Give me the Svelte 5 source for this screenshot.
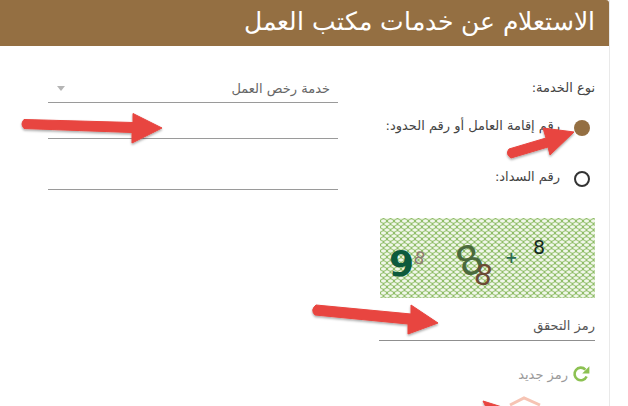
<script lang="ts">
  const serviceTypes = [
    { label: "رقم إقامة العامل أو رقم الحدود:", checked: true },
    { label: "رقم السداد:", checked: false },
  ];
</script>

<div class="page">
  <div class="card" dir="rtl">
    <header class="title">الاستعلام عن خدمات مكتب العمل</header>

    <form class="form">
      <div class="row first">
        <span class="label">نوع الخدمة:</span>
        <div class="select">
          <span>خدمة رخص العمل</span>
          <i class="caret"></i>
        </div>
      </div>

      {#each serviceTypes as item}
        <div class="row radio-row">
          <label class="radio-label">
            <span class="radio" class:checked={item.checked}></span>
            <span class="label">{item.label}</span>
          </label>
          <div class="line"></div>
        </div>
      {/each}

      <div class="captcha">
        <svg viewBox="0 0 215 80" width="215" height="80">
          <text x="9" y="58" class="d-nine">9</text>
          <text x="34" y="46" class="d-small" transform="rotate(15 40 40)">8</text>
          <text x="76" y="56" class="d-ring" transform="rotate(-25 90 40)">8</text>
          <text x="95" y="67" class="d-ring brown" transform="rotate(10 106 55)">8</text>
          <text x="125" y="45" class="d-plus">+</text>
          <text x="153" y="36" class="d-eight">8</text>
        </svg>
      </div>

      <div class="code-input">رمز التحقق</div>

      <div class="new-code">
        <svg width="18" height="18" viewBox="0 0 18 18" fill="none">
          <path d="M14.6 11.5A6.3 6.3 0 1 1 13.4 4.6" stroke="#8cc152" stroke-width="2.6" />
          <path d="M17.4 1.2V8.4H10.2Z" fill="#8cc152" />
        </svg>
        <span>رمز جديد</span>
      </div>
    </form>
  </div>

  <svg class="arrows" width="628" height="406" viewBox="0 0 628 406">
    <defs>
      <filter id="shadow" x="-10%" y="-30%" width="120%" height="170%">
        <feDropShadow dx="0" dy="1.5" stdDeviation="1.2" flood-color="#000" flood-opacity="0.35" />
      </filter>
    </defs>
    <g fill="#e8453f" filter="url(#shadow)" stroke="#e8453f" stroke-linejoin="round">
      <path d="M24 119.5L133 122.5V113.5L162 128L132 143V132.5L24 128.5Q20 124 24 119.5Z" />
      <path d="M509 149L546 138L543 128L574 132L550 155L548 147L511 158Q505 154 509 149Z" />
      <path d="M316 305L411 314V305L438 323L408 334V324L315 315Q310 310 316 305Z" />
      <path d="M483 401L502 407H486Z" />
    </g>
    <path d="M510 405L524 398L540 405" fill="none" stroke="#f6c4b4" stroke-width="3" />
  </svg>
</div>

<style>
  :global(body) {
    margin: 0;
    background: #fff;
  }

  .page {
    position: relative;
    width: 628px;
    height: 406px;
    overflow: hidden;
    font-family: "DejaVu Sans", sans-serif;
    color: #444;
  }

  .card {
    width: 609px;
    height: 406px;
    border-right: 1px solid #e9e9e9;
  }

  .title {
    height: 46px;
    line-height: 44px;
    padding-right: 14px;
    background: #946f42;
    color: #fff;
    font-size: 25px;
    font-weight: 300;
    border-top-right-radius: 3px;
  }

  .form {
    display: flex;
    flex-direction: column;
    padding: 28px 14px 0 0;
  }

  .row {
    display: grid;
    grid-template-columns: 216px 290px;
    column-gap: 41px;
    justify-content: start;
  }

  .first {
    height: 29px;
  }

  .radio-row {
    height: 36px;
    align-items: end;
  }

  .radio-row + .radio-row {
    height: 51px;
  }

  .label {
    font-size: 13px;
    line-height: 28px;
    color: #444;
  }

  .select {
    display: flex;
    justify-content: space-between;
    align-items: center;
    padding: 0 8px 0 9px;
    border-bottom: 1px solid #9a9a9a;
    font-size: 13px;
    color: #666;
  }

  .caret {
    width: 0;
    height: 0;
    border-left: 4px solid transparent;
    border-right: 4px solid transparent;
    border-top: 5px solid #b5b5b5;
  }

  .line {
    border-bottom: 1px solid #9a9a9a;
    height: 30px;
  }

  .radio-label {
    display: flex;
    align-items: center;
    gap: 14px;
    margin-right: 5px;
    height: 30px;
    transform: translateY(4px);
  }

  .radio-label .label {
    transform: translateY(-2px);
  }

  .radio {
    flex: none;
    box-sizing: border-box;
    width: 16px;
    height: 16px;
    border: 2px solid #333;
    border-radius: 50%;
  }

  .radio.checked {
    border: none;
    background: #946f42;
  }

  .captcha {
    width: 215px;
    height: 80px;
    margin-top: 28px;
    background-color: #8fbd68;
    background-image: radial-gradient(ellipse 2.8px 1.9px at center, #f1f7ea 70%, transparent 100%),
      radial-gradient(ellipse 2.8px 1.9px at center, #f1f7ea 70%, transparent 100%);
    background-size: 7px 6px;
    background-position: 0 0, 3.5px 3px;
  }

  .captcha svg {
    display: block;
    direction: ltr;
  }

  .captcha text {
    direction: ltr;
    font-family: "DejaVu Sans", sans-serif;
  }

  .d-nine {
    font-size: 36px;
    font-weight: 700;
    fill: #0d5a3c;
  }

  .d-small {
    font-size: 17px;
    fill: #8b7a72;
  }

  .d-ring {
    font-size: 40px;
    fill: #4a6a3c;
  }

  .d-ring.brown {
    font-size: 28px;
    fill: #6b4a35;
  }

  .d-plus {
    font-size: 15px;
    font-weight: 700;
    fill: #2a6b55;
  }

  .d-eight {
    font-size: 19px;
    fill: #14281c;
  }

  .code-input {
    width: 216px;
    box-sizing: border-box;
    height: 43px;
    padding-top: 20px;
    border-bottom: 1px solid #8f8f8f;
    font-size: 13px;
    color: #555;
  }

  .new-code {
    display: flex;
    align-items: center;
    gap: 4px;
    margin: 24px 5px 0 0;
    font-size: 13px;
    color: #9a9a9a;
  }

  .arrows {
    position: absolute;
    top: 0;
    left: 0;
    pointer-events: none;
  }
</style>
